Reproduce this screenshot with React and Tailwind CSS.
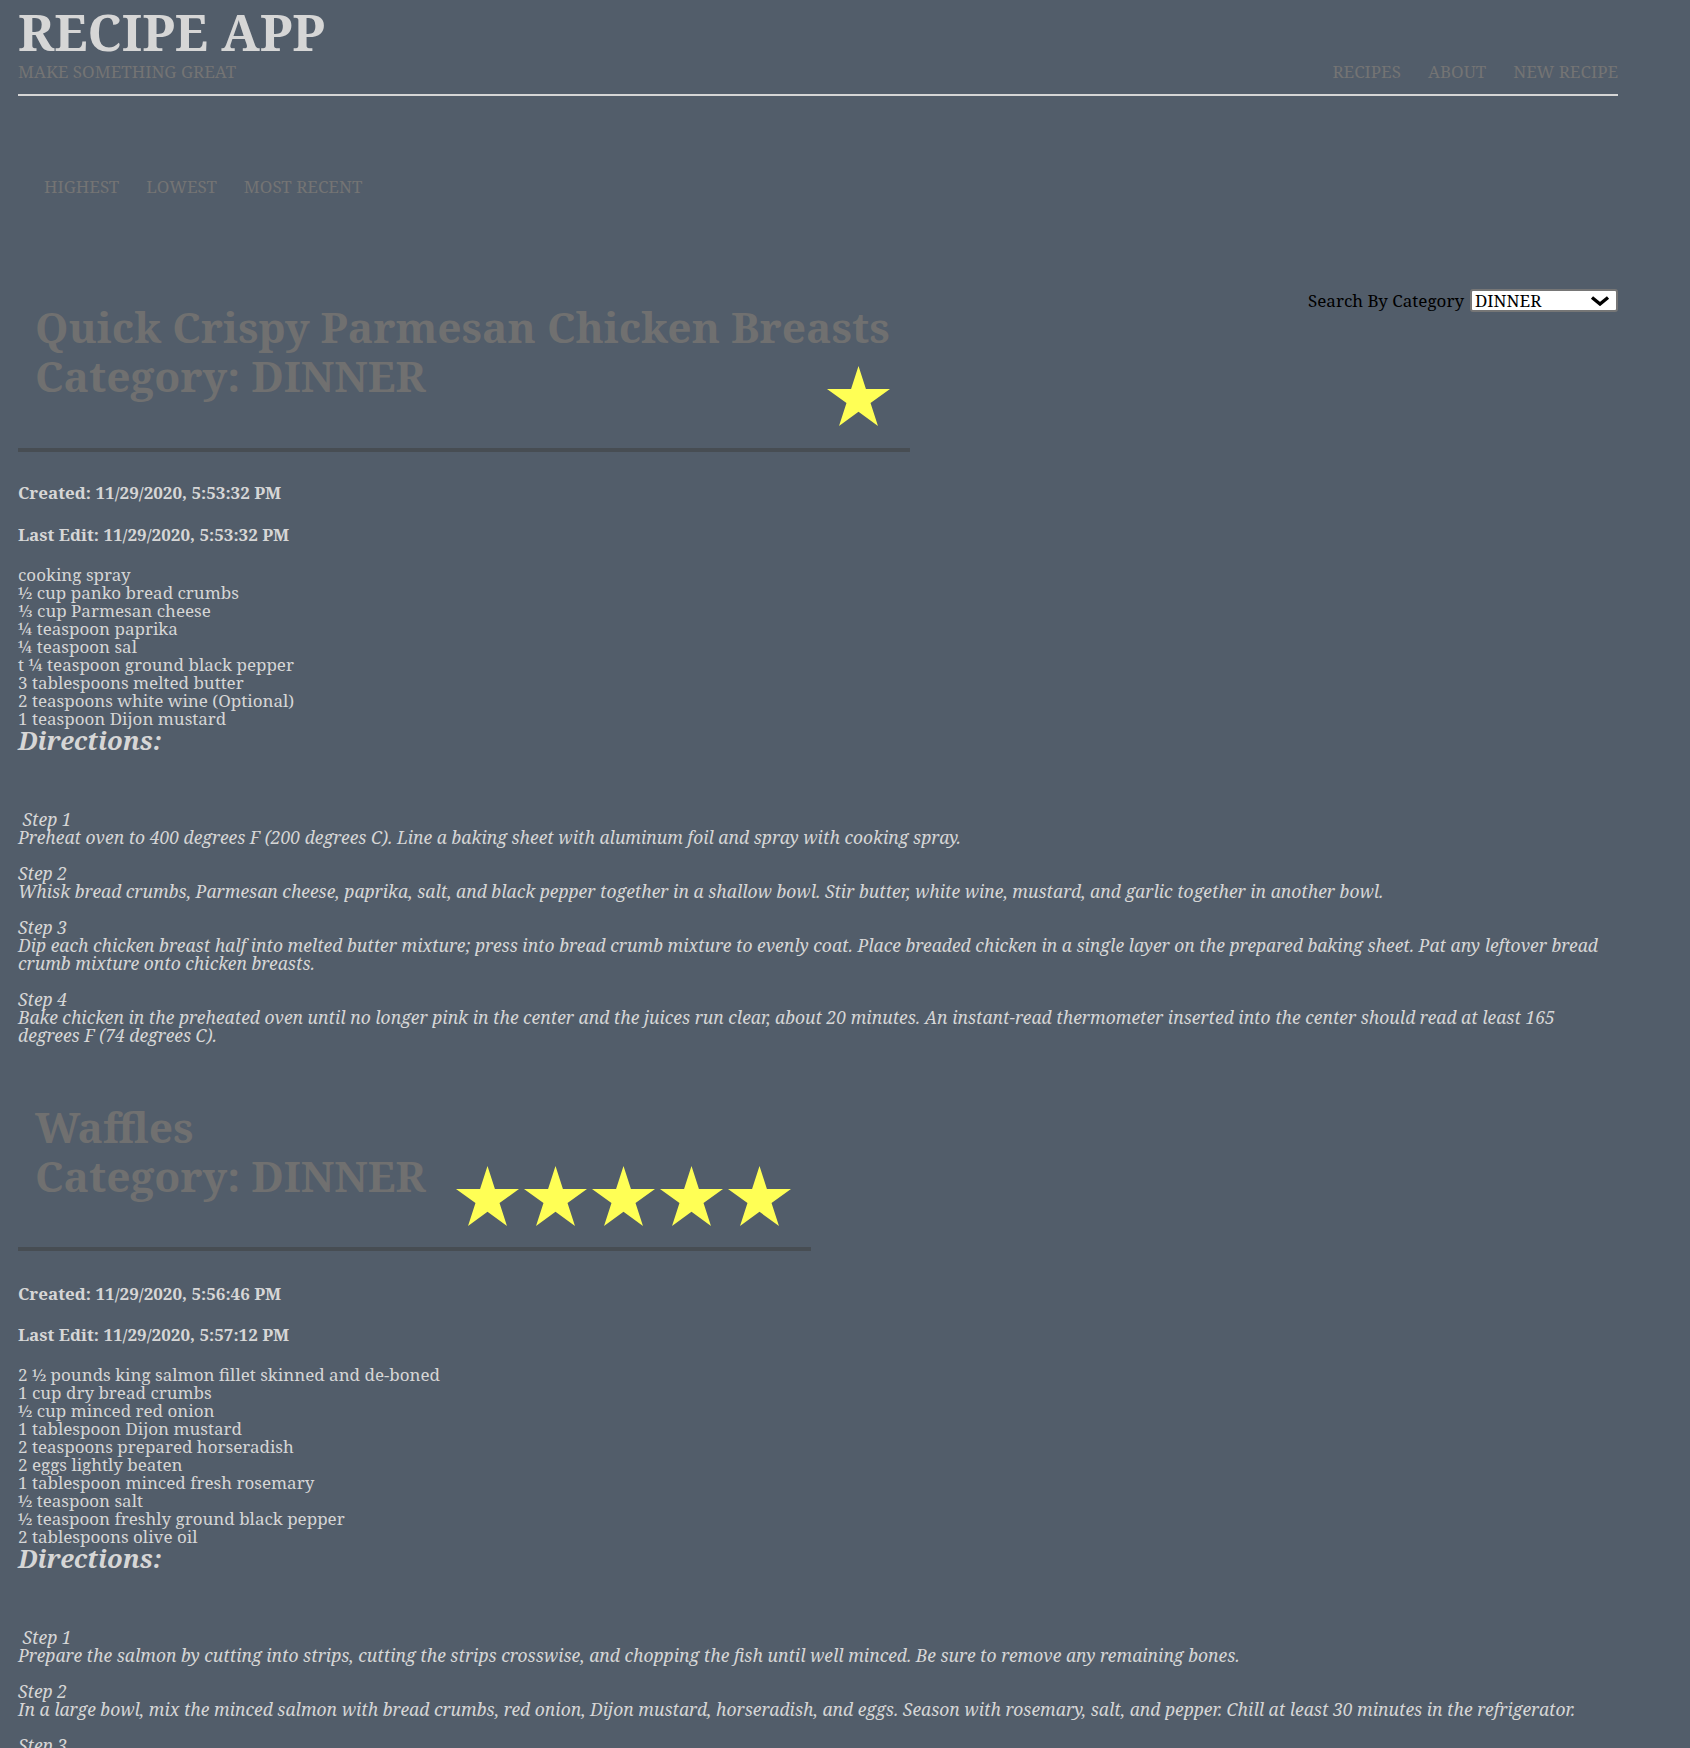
import React from "react";

const recipes = [
  {
    title: "Quick Crispy Parmesan Chicken Breasts",
    category: "DINNER",
    rating: 1,
    created: "11/29/2020, 5:53:32 PM",
    edited: "11/29/2020, 5:53:32 PM",
    ingredients: [
      "cooking spray",
      "½ cup panko bread crumbs",
      "⅓ cup Parmesan cheese",
      "¼ teaspoon paprika",
      "¼ teaspoon sal",
      "t ¼ teaspoon ground black pepper",
      "3 tablespoons melted butter",
      "2 teaspoons white wine (Optional)",
      "1 teaspoon Dijon mustard",
    ],
    steps: [
      "Preheat oven to 400 degrees F (200 degrees C). Line a baking sheet with aluminum foil and spray with cooking spray.",
      "Whisk bread crumbs, Parmesan cheese, paprika, salt, and black pepper together in a shallow bowl. Stir butter, white wine, mustard, and garlic together in another bowl.",
      "Dip each chicken breast half into melted butter mixture; press into bread crumb mixture to evenly coat. Place breaded chicken in a single layer on the prepared baking sheet. Pat any leftover bread crumb mixture onto chicken breasts.",
      "Bake chicken in the preheated oven until no longer pink in the center and the juices run clear, about 20 minutes. An instant-read thermometer inserted into the center should read at least 165 degrees F (74 degrees C).",
    ],
  },
  {
    title: "Waffles",
    category: "DINNER",
    rating: 5,
    created: "11/29/2020, 5:56:46 PM",
    edited: "11/29/2020, 5:57:12 PM",
    ingredients: [
      "2 ½ pounds king salmon fillet skinned and de-boned",
      "1 cup dry bread crumbs",
      "½ cup minced red onion",
      "1 tablespoon Dijon mustard",
      "2 teaspoons prepared horseradish",
      "2 eggs lightly beaten",
      "1 tablespoon minced fresh rosemary",
      "½ teaspoon salt",
      "½ teaspoon freshly ground black pepper",
      "2 tablespoons olive oil",
    ],
    steps: [
      "Prepare the salmon by cutting into strips, cutting the strips crosswise, and chopping the fish until well minced. Be sure to remove any remaining bones.",
      "In a large bowl, mix the minced salmon with bread crumbs, red onion, Dijon mustard, horseradish, and eggs. Season with rosemary, salt, and pepper. Chill at least 30 minutes in the refrigerator.",
      "Form the salmon mixture into 8 patties. Heat the olive oil in a large skillet over medium heat, and cook the patties until golden brown, about 5 minutes per side.",
    ],
  },
];

function Star() {
  return (
    <svg width="63" height="60" viewBox="-95.1 -100 190.2 180.9" className="shrink-0">
      <polygon
        fill="#ffff55"
        points="0,-100 22.45,-30.9 95.1,-30.9 36.3,11.8 58.8,80.9 0,38.2 -58.8,80.9 -36.3,11.8 -95.1,-30.9 -22.45,-30.9"
      />
    </svg>
  );
}

function Recipe({ recipe, first }) {
  return (
    <section className={first ? "mt-[105px]" : "mt-[58px]"}>
      <div
        className={
          "inline-flex flex-col border-b-4 border-[#474d53] pl-[17px] pr-[20px] text-[42.5px] leading-[49px] font-bold text-[#707070] " +
          (first ? "pb-[22px]" : "pb-[21px]")
        }
      >
        <h1>{recipe.title}</h1>
        <div className="flex justify-between items-start gap-[30px]">
          <h1>Category: {recipe.category}</h1>
          <div className="flex gap-[5px] mt-[15px]">
            {Array.from({ length: recipe.rating }).map((_, i) => (
              <Star key={i} />
            ))}
          </div>
        </div>
      </div>

      <p className={first ? "mt-[32px] font-bold" : "mt-[34px] font-bold"}>Created: {recipe.created}</p>
      <p className={first ? "mt-[24px] font-bold" : "mt-[23px] font-bold"}>Last Edit: {recipe.edited}</p>
      <ul className="mt-[22px]">
        {recipe.ingredients.map((item) => (
          <li key={item}>{item}</li>
        ))}
      </ul>
      <h2 className="text-[25.5px] leading-[24px] font-bold italic">Directions:</h2>
      <div className="mt-[58px] italic text-[17.5px] flex flex-col gap-[18px]">
        {recipe.steps.map((step, i) => (
          <div key={i}>
            <p>
              {i === 0 ? "\u00a0" : ""}Step {i + 1}
            </p>
            <p>{step}</p>
          </div>
        ))}
      </div>
    </section>
  );
}

export default function App() {
  return (
    <div className="min-h-screen bg-[#525d6a] font-['Noto_Serif','DejaVu_Serif',serif] text-[17px] leading-[18px] text-[#d6d6d6]">
      <div className="w-[1636px] px-[18px] pb-[40px]">
        <header className="flex justify-between items-end border-b-2 border-[#d6d6d6] pt-[6px] pb-[12px]">
          <div>
            <div className="text-[51px] leading-none font-bold">RECIPE APP</div>
            <div className="mt-[5px] text-[17px] leading-[20px] text-[#747474]">MAKE SOMETHING GREAT</div>
          </div>
          <nav className="flex gap-[27px] text-[17px] leading-[20px] text-[#747474]">
            <a>RECIPES</a>
            <a>ABOUT</a>
            <a>NEW RECIPE</a>
          </nav>
        </header>

        <main className="flow-root">
          <div className="mt-[81px] ml-[26px] flex gap-[27px] text-[17px] leading-[20px] text-[#747474]">
            <a>HIGHEST</a>
            <a>LOWEST</a>
            <a>MOST RECENT</a>
          </div>

          <div className="float-right mt-[92px] flex items-center gap-[6px] text-black">
            <span>Search By Category</span>
            <div className="w-[148px] h-[23px] bg-white border-2 border-[#767676] rounded-[3px] flex items-center justify-between pl-[3px] pr-[6px] text-[17px]">
              <span>DINNER</span>
              <svg width="20" height="10" viewBox="0 0 20 10">
                <polyline points="2,1.5 10,8 18,1.5" fill="none" stroke="black" strokeWidth="3.4" />
              </svg>
            </div>
          </div>

          {recipes.map((r, i) => (
            <Recipe key={r.title} recipe={r} first={i === 0} />
          ))}
        </main>
      </div>
    </div>
  );
}
